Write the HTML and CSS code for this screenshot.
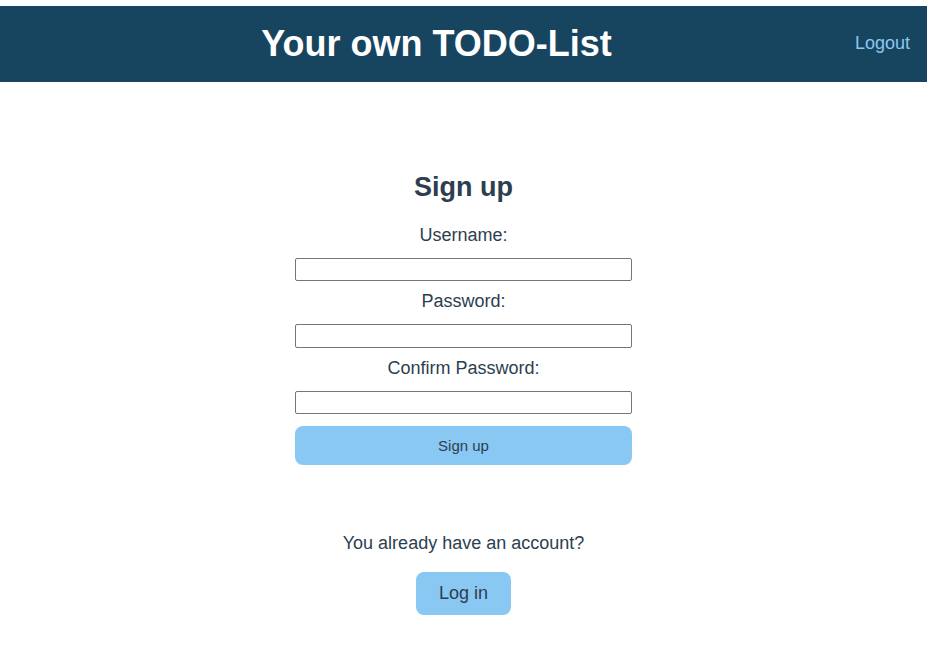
FILE: index.html
```html
<!DOCTYPE html>
<html lang="en">
<head>
<meta charset="utf-8">
<title>Your own TODO-List</title>
<link rel="stylesheet" href="styles.css">
</head>
<body>
<header class="topbar">
  <h1 class="app-title">Your own TODO-List</h1>
  <a class="logout" href="#">Logout</a>
</header>
<main class="page">
  <form class="signup">
    <h2 class="signup-title">Sign up</h2>
    <label class="field-label" for="u">Username:</label>
    <input class="field-input" id="u" type="text">
    <label class="field-label" for="p">Password:</label>
    <input class="field-input" id="p" type="password">
    <label class="field-label" for="c">Confirm Password:</label>
    <input class="field-input" id="c" type="password">
    <button class="submit" type="button">Sign up</button>
  </form>
  <p class="have-account">You already have an account?</p>
  <button class="login" type="button">Log in</button>
</main>
</body>
</html>
```
FILE: styles.css
```css
html, body {
  margin: 0;
  padding: 0;
  background: #ffffff;
}
body {
  font-family: "Liberation Sans", Arial, sans-serif;
  color: #2c3e50;
  padding-top: 6px;
  width: 927px;
}
.topbar {
  display: flex;
  align-items: center;
  height: 76px;
  background: #17445f;
}
.app-title {
  flex: 1;
  margin: 0;
  padding-left: 18px;
  text-align: center;
  color: #ffffff;
  font-size: 36px;
  font-weight: bold;
  line-height: 42px;
}
.logout {
  margin-right: 17px;
  margin-bottom: 2px;
  color: #8ac8f0;
  font-size: 18px;
  text-decoration: none;
}
.page {
  display: flex;
  flex-direction: column;
  align-items: center;
}
.signup {
  display: flex;
  flex-direction: column;
  align-items: center;
  width: 337px;
}
.signup-title {
  margin: 90px 0 22px;
  font-size: 27px;
  line-height: 31px;
  font-weight: bold;
}
.field-label {
  font-size: 18px;
  line-height: 21px;
  margin-bottom: 12px;
}
.field-input {
  box-sizing: border-box;
  width: 337px;
  height: 23.3px;
  margin: 0 0 10px;
  border: 1px solid #767676;
  border-radius: 2px;
  padding: 1px 2px;
  font-size: 13px;
}
.signup .field-input:last-of-type {
  margin-bottom: 12px;
}
.submit {
  width: 337px;
  height: 39px;
  border: none;
  border-radius: 8px;
  background: #89c8f2;
  color: #2c3e50;
  font-family: "Liberation Sans", Arial, sans-serif;
  font-size: 15px;
}
.have-account {
  margin: 68.5px 0 18px;
  font-size: 18px;
  line-height: 21px;
}
.login {
  height: 43px;
  padding: 0 23px;
  border: none;
  border-radius: 8px;
  background: #89c8f2;
  color: #2c3e50;
  font-family: "Liberation Sans", Arial, sans-serif;
  font-size: 18px;
}
```
